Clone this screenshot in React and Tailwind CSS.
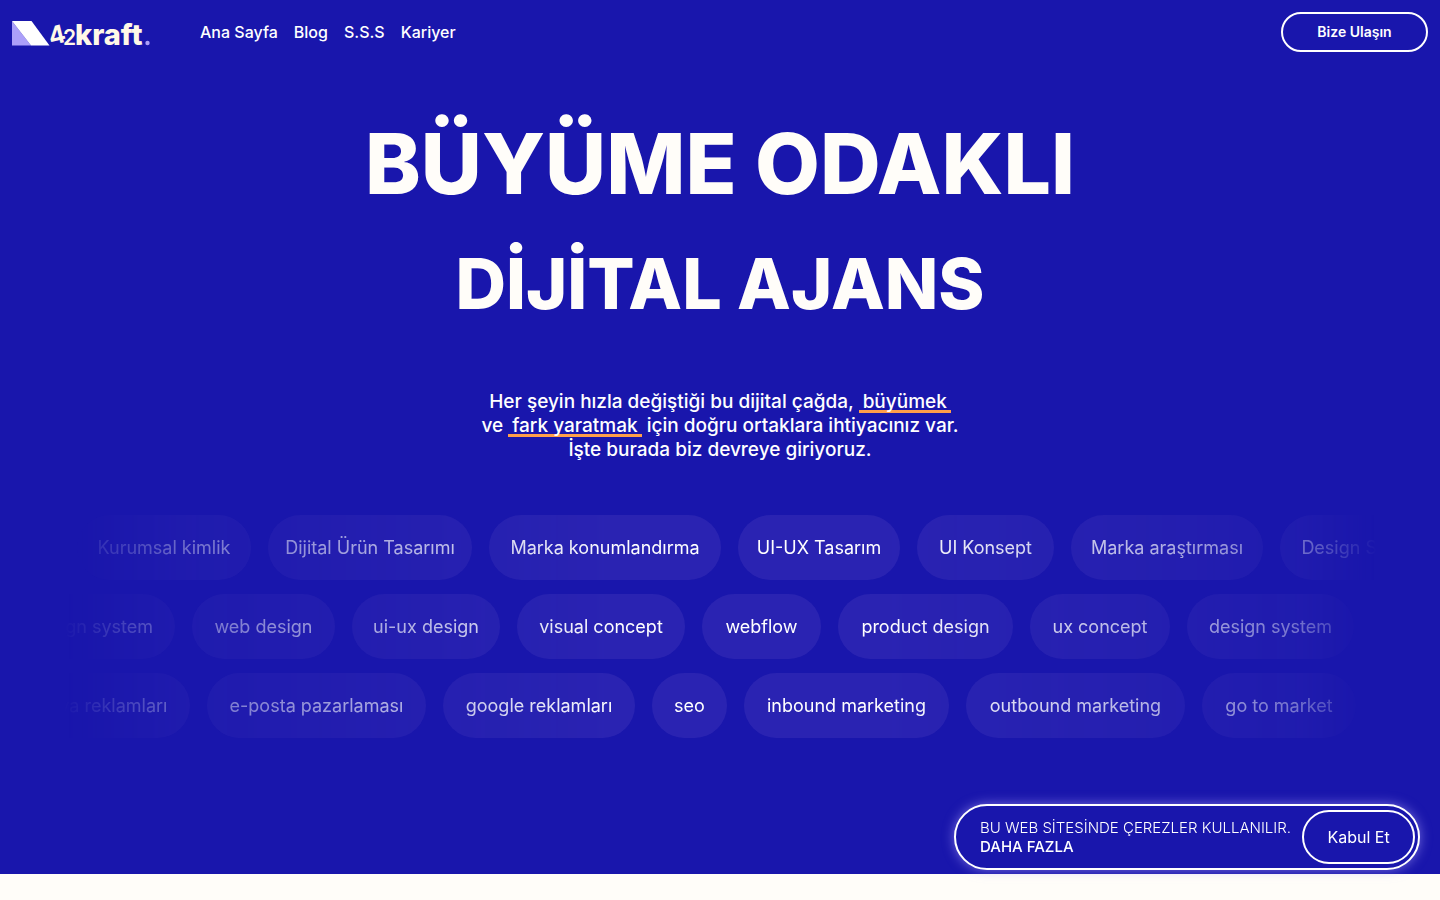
const navLinks = ["Ana Sayfa", "Blog", "S.S.S", "Kariyer"];

const rows = [
  {
    offset: "ml-[14px]",
    pills: [
      ["Kurumsal kimlik", "w-[174px]"],
      ["Dijital Ürün Tasarımı", "w-[204px]"],
      ["Marka konumlandırma", "w-[232px]"],
      ["UI-UX Tasarım", "w-[162px]"],
      ["UI Konsept", "w-[137px]"],
      ["Marka araştırması", "w-[192px]"],
      ["Design System", "w-[170px]"],
    ],
  },
  {
    offset: "-ml-[55px]",
    pills: [
      ["design system", "w-[167px]"],
      ["web design", "w-[143px]"],
      ["ui-ux design", "w-[148px]"],
      ["visual concept", "w-[168px]"],
      ["webflow", "w-[119px]"],
      ["product design", "w-[175px]"],
      ["ux concept", "w-[140px]"],
      ["design system", "w-[167px]"],
    ],
  },
  {
    offset: "-ml-[123px]",
    pills: [
      ["sosyal medya reklamları", "w-[250px]"],
      ["e-posta pazarlaması", "w-[219px]"],
      ["google reklamları", "w-[192px]"],
      ["seo", "w-[75px]"],
      ["inbound marketing", "w-[205px]"],
      ["outbound marketing", "w-[219px]"],
      ["go to market", "w-[154px]"],
    ],
  },
];

function Logo() {
  return (
    <a href="#" aria-label="42kraft" className="block">
      <svg width="140" height="40" viewBox="0 0 140 40" className="overflow-visible" fontFamily="Inter, sans-serif">
        <path d="M0 9V33.500H19Z" fill="#ab9ff9" />
        <path d="M0 9H19.500L37.500 33.500H19Z" fill="#fff" />
        <text x="37" y="32" fontSize="25" fontWeight="700" fill="#fff8e7" transform="rotate(-14 44 26)">4</text>
        <text x="51" y="33" fontSize="21" fontWeight="600" fill="#fff8e7">2</text>
        <text x="63" y="33" fontSize="29" fontWeight="800" fill="#fff8e7">kraft</text>
        <circle cx="135.500" cy="31" r="2.200" fill="#ab9ff9" />
      </svg>
    </a>
  );
}

function Mark({ children }) {
  return <span className="px-1 shadow-[inset_0_-3px_0_#ff9f4a]">{children}</span>;
}

export default function App() {
  return (
    <div className="min-h-screen bg-[#fffdf9] font-['Inter',sans-serif] text-white">
      <section className="bg-[#1916ac] pb-[136px]">
        <header className="flex h-16 items-center px-3">
          <Logo />
          <nav className="ml-12 flex flex-1 gap-4 text-base font-medium">
            {navLinks.map((l) => (
              <a key={l} href="#">{l}</a>
            ))}
          </nav>
          <button className="h-10 w-[147px] rounded-full border-2 border-white text-sm font-semibold">
            Bize Ulaşın
          </button>
        </header>

        <main>
          <h1 className="pt-9 text-center font-extrabold text-[#fffdf9]">
            <span className="block text-[84px] leading-[128px]">BÜYÜME ODAKLI</span>
            <span className="block text-[70px] leading-[112px]">DİJİTAL AJANS</span>
          </h1>
          <p className="mt-[50px] text-center text-[19px] leading-6 font-medium">
            Her şeyin hızla değiştiği bu dijital çağda, <Mark>büyümek</Mark>
            <br />
            ve <Mark>fark yaratmak</Mark> için doğru ortaklara ihtiyacınız var.
            <br />
            İşte burada biz devreye giriyoruz.
          </p>

          <div className="mx-[63px] mt-[53px] flex flex-col gap-[14px] overflow-hidden [mask-image:linear-gradient(to_right,transparent,rgba(0,0,0,0.4)_10%,rgba(0,0,0,0.7)_28%,black_42%,black_62%,rgba(0,0,0,0.65)_84%,rgba(0,0,0,0.4)_94%,transparent)]">
            {rows.map((row, i) => (
              <ul key={i} className={`flex gap-[17px] ${row.offset}`}>
                {row.pills.map(([label, width], j) => (
                  <li
                    key={j}
                    className={`flex h-[65px] shrink-0 items-center justify-center rounded-full bg-[#c8a0f0]/10 text-lg whitespace-nowrap ${width}`}
                  >
                    {label}
                  </li>
                ))}
              </ul>
            ))}
          </div>
        </main>
      </section>

      <aside className="fixed right-5 bottom-[30px] flex h-[66px] items-center gap-[11px] rounded-full border-2 border-white bg-[#1916ac] pr-[3px] pl-6 shadow-[0_0_12px_rgba(171,159,249,0.6)]">
        <p className="text-[15px] leading-[19px] font-light">
          BU WEB SİTESİNDE ÇEREZLER KULLANILIR.
          <br />
          <a href="#" className="font-medium">DAHA FAZLA</a>
        </p>
        <button className="h-[54px] w-[113px] rounded-full border-2 border-white text-base">Kabul Et</button>
      </aside>
    </div>
  );
}
